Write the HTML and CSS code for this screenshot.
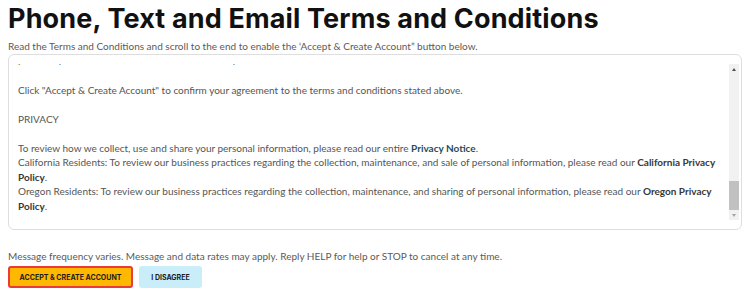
FILE: index.html
```html
<!DOCTYPE html>
<html>
<head>
<meta charset="utf-8">
<link rel="stylesheet" href="styles.css">
</head>
<body>
<main class="page">
  <h1 class="title">Phone, Text and Email Terms and Conditions</h1>
  <p class="intro">Read the Terms and Conditions and scroll to the end to enable the ‘Accept &amp; Create Account” button below.</p>
  <div class="terms">
    <div class="terms-view">
      <div class="terms-content">
        <p class="cut">. &nbsp; &nbsp; &nbsp; &nbsp; &nbsp; &nbsp; &nbsp; . &nbsp; &nbsp; &nbsp; &nbsp; &nbsp; &nbsp; &nbsp; &nbsp; &nbsp; &nbsp; &nbsp; &nbsp; &nbsp; &nbsp; &nbsp; &nbsp; &nbsp; &nbsp; &nbsp; &nbsp; &nbsp; &nbsp; &nbsp; &nbsp; &nbsp; &nbsp; &nbsp; &nbsp; &nbsp; &nbsp; &nbsp; &nbsp; &nbsp; .</p>
        <p>Click "Accept &amp; Create Account" to confirm your agreement to the terms and conditions stated above.</p>
        <p>PRIVACY</p>
        <p>To review how we collect, use and share your personal information, please read our entire <a class="link" href="#">Privacy Notice</a>.<br>
        California Residents: To review our business practices regarding the collection, maintenance, and sale of personal information, please read our <a class="link dark" href="#">California Privacy Policy</a>.<br>
        Oregon Residents: To review our business practices regarding the collection, maintenance, and sharing of personal information, please read our <a class="link dark" href="#">Oregon Privacy Policy</a>.</p>
      </div>
    </div>
    <div class="scrollbar">
      <span class="arrow up"></span>
      <div class="track"><div class="thumb"></div></div>
      <span class="arrow down"></span>
    </div>
  </div>
  <p class="notice">Message frequency varies. Message and data rates may apply. Reply HELP for help or STOP to cancel at any time.</p>
  <div class="actions">
    <button class="btn btn-accept">ACCEPT &amp; CREATE ACCOUNT</button>
    <button class="btn btn-disagree">I DISAGREE</button>
  </div>
</main>
</body>
</html>
```
FILE: styles.css
```css
html, body { margin: 0; padding: 0; background: #fff; }
body { font-family: Lato, "Liberation Sans", sans-serif; color: #555; }
.page { padding: 0 8px; }
.title {
  font-family: Inter, "Liberation Sans", sans-serif;
  font-weight: 700;
  font-size: 27px;
  line-height: 37px;
  margin: 0;
  color: #111;
  letter-spacing: 0.15px;
}
.intro { font-size: 10px; margin: 2px 0 1px; line-height: 14px; color: #5a5a5a; }
.terms {
  display: flex;
  height: 176px;
  border: 1px solid #dedede;
  border-radius: 6px;
  box-sizing: border-box;
  padding: 9px 2px 9px 0;
}
.terms-view {
  flex: 1;
  overflow: hidden;
  display: flex;
  flex-direction: column;
  justify-content: flex-end;
  padding: 0 6px 0 9px;
}
.terms-content { font-size: 10px; line-height: 14.5px; color: #555; }
.terms-content p { margin: 0 0 14.5px; }
.terms-content p:last-child { margin-bottom: 7px; }
.cut { color: #777; }
.link { color: #1e4d5c; text-decoration: none; font-weight: 700; }
.link.dark { color: #383838; }
.scrollbar {
  width: 10px;
  display: flex;
  flex-direction: column;
  background: #f1f1f1;
}
.arrow { height: 10px; display: flex; align-items: center; justify-content: center; }
.arrow::before { content: ""; border-left: 2.5px solid transparent; border-right: 2.5px solid transparent; }
.arrow.up::before { border-bottom: 3px solid #505050; }
.arrow.down::before { border-top: 3px solid #a3a3a3; }
.track { flex: 1; display: flex; flex-direction: column; justify-content: flex-end; }
.thumb { height: 29px; background: #c1c1c1; }
.notice { font-size: 10px; margin: 19px 0 3px; line-height: 14px; color: #5a5a5a; }
.actions { display: flex; gap: 6px; }
.btn {
  font-family: Inter, "Liberation Sans", sans-serif;
  font-weight: 700;
  font-size: 7px;
  letter-spacing: 0;
  height: 22px;
  padding: 0;
  border-radius: 3px;
  cursor: pointer;
  color: #1c1c1c;
  white-space: nowrap;
}
.btn-accept { background: #ffb800; border: 2px solid #ea3a3a; width: 125px; }
.btn-disagree { background: #c9eef9; border: none; width: 63px; }
```
